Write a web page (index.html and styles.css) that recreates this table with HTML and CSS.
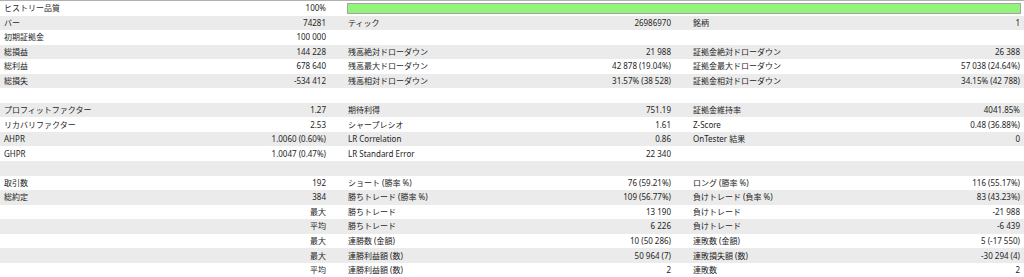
FILE: index.html
```html
<!DOCTYPE html>
<html lang="ja">
<head>
<meta charset="utf-8">
<title>レポート</title>
<link rel="stylesheet" href="styles.css">
</head>
<body>
<div class="report">
  <div class="row">
    <div class="cell"><span>ヒストリー品質</span><span>100%</span></div>
    <div class="cell span2"><div class="bar"></div></div>
  </div>
  <div class="row alt">
    <div class="cell"><span>バー</span><span>74281</span></div>
    <div class="cell"><span>ティック</span><span>26986970</span></div>
    <div class="cell"><span>銘柄</span><span>1</span></div>
  </div>
  <div class="row">
    <div class="cell"><span>初期証拠金</span><span>100 000</span></div>
    <div class="cell"></div>
    <div class="cell"></div>
  </div>
  <div class="row alt">
    <div class="cell"><span>総損益</span><span>144 228</span></div>
    <div class="cell"><span>残高絶対ドローダウン</span><span>21 988</span></div>
    <div class="cell"><span>証拠金絶対ドローダウン</span><span>26 388</span></div>
  </div>
  <div class="row">
    <div class="cell"><span>総利益</span><span>678 640</span></div>
    <div class="cell"><span>残高最大ドローダウン</span><span>42 878 (19.04%)</span></div>
    <div class="cell"><span>証拠金最大ドローダウン</span><span>57 038 (24.64%)</span></div>
  </div>
  <div class="row alt">
    <div class="cell"><span>総損失</span><span>-534 412</span></div>
    <div class="cell"><span>残高相対ドローダウン</span><span>31.57% (38 528)</span></div>
    <div class="cell"><span>証拠金相対ドローダウン</span><span>34.15% (42 788)</span></div>
  </div>
  <div class="row"></div>
  <div class="row alt">
    <div class="cell"><span>プロフィットファクター</span><span>1.27</span></div>
    <div class="cell"><span>期待利得</span><span>751.19</span></div>
    <div class="cell"><span>証拠金維持率</span><span>4041.85%</span></div>
  </div>
  <div class="row">
    <div class="cell"><span>リカバリファクター</span><span>2.53</span></div>
    <div class="cell"><span>シャープレシオ</span><span>1.61</span></div>
    <div class="cell"><span>Z-Score</span><span>0.48 (36.88%)</span></div>
  </div>
  <div class="row alt">
    <div class="cell"><span>AHPR</span><span>1.0060 (0.60%)</span></div>
    <div class="cell"><span>LR Correlation</span><span>0.86</span></div>
    <div class="cell"><span>OnTester 結果</span><span>0</span></div>
  </div>
  <div class="row">
    <div class="cell"><span>GHPR</span><span>1.0047 (0.47%)</span></div>
    <div class="cell"><span>LR Standard Error</span><span>22 340</span></div>
    <div class="cell"></div>
  </div>
  <div class="row alt"></div>
  <div class="row">
    <div class="cell"><span>取引数</span><span>192</span></div>
    <div class="cell"><span>ショート (勝率 %)</span><span>76 (59.21%)</span></div>
    <div class="cell"><span>ロング (勝率 %)</span><span>116 (55.17%)</span></div>
  </div>
  <div class="row alt">
    <div class="cell"><span>総約定</span><span>384</span></div>
    <div class="cell"><span>勝ちトレード (勝率 %)</span><span>109 (56.77%)</span></div>
    <div class="cell"><span>負けトレード (負率 %)</span><span>83 (43.23%)</span></div>
  </div>
  <div class="row">
    <div class="cell"><span></span><span>最大</span></div>
    <div class="cell"><span>勝ちトレード</span><span>13 190</span></div>
    <div class="cell"><span>負けトレード</span><span>-21 988</span></div>
  </div>
  <div class="row alt">
    <div class="cell"><span></span><span>平均</span></div>
    <div class="cell"><span>勝ちトレード</span><span>6 226</span></div>
    <div class="cell"><span>負けトレード</span><span>-6 439</span></div>
  </div>
  <div class="row">
    <div class="cell"><span></span><span>最大</span></div>
    <div class="cell"><span>連勝数 (金額)</span><span>10 (50 286)</span></div>
    <div class="cell"><span>連敗数 (金額)</span><span>5 (-17 550)</span></div>
  </div>
  <div class="row alt">
    <div class="cell"><span></span><span>最大</span></div>
    <div class="cell"><span>連勝利益額 (数)</span><span>50 964 (7)</span></div>
    <div class="cell"><span>連敗損失額 (数)</span><span>-30 294 (4)</span></div>
  </div>
  <div class="row">
    <div class="cell"><span></span><span>平均</span></div>
    <div class="cell"><span>連勝利益額 (数)</span><span>2</span></div>
    <div class="cell"><span>連敗数</span><span>2</span></div>
  </div>
</div>
</body>
</html>
```
FILE: styles.css
```css
html, body {
  margin: 0;
  padding: 0;
  background: #ffffff;
}
body {
  font-family: "Noto Sans", "Noto Sans CJK JP", sans-serif;
  font-size: 8px;
  color: #1e1e1e;
  overflow: hidden;
}
.report {
  border-top: 1px solid #b0b0b0;
  display: flex;
  flex-direction: column;
}
.row {
  height: 14.55px;
  display: grid;
  grid-template-columns: 344px 345px 1fr;
  align-items: center;
  background: #ffffff;
}
.row.alt {
  background: #ebebeb;
}
.cell {
  display: flex;
  justify-content: space-between;
  align-items: center;
  padding: 0 18px 0 4px;
  white-space: nowrap;
  line-height: 14px;
}
.cell:nth-child(3) {
  padding-right: 4px;
}
.cell.span2 {
  grid-column: 2 / 4;
  padding: 0 3px 0 3px;
}
.bar {
  flex: 1;
  height: 11px;
  box-sizing: border-box;
  border: 1px solid #a3a3a3;
  background: #93f47c;
}
```
